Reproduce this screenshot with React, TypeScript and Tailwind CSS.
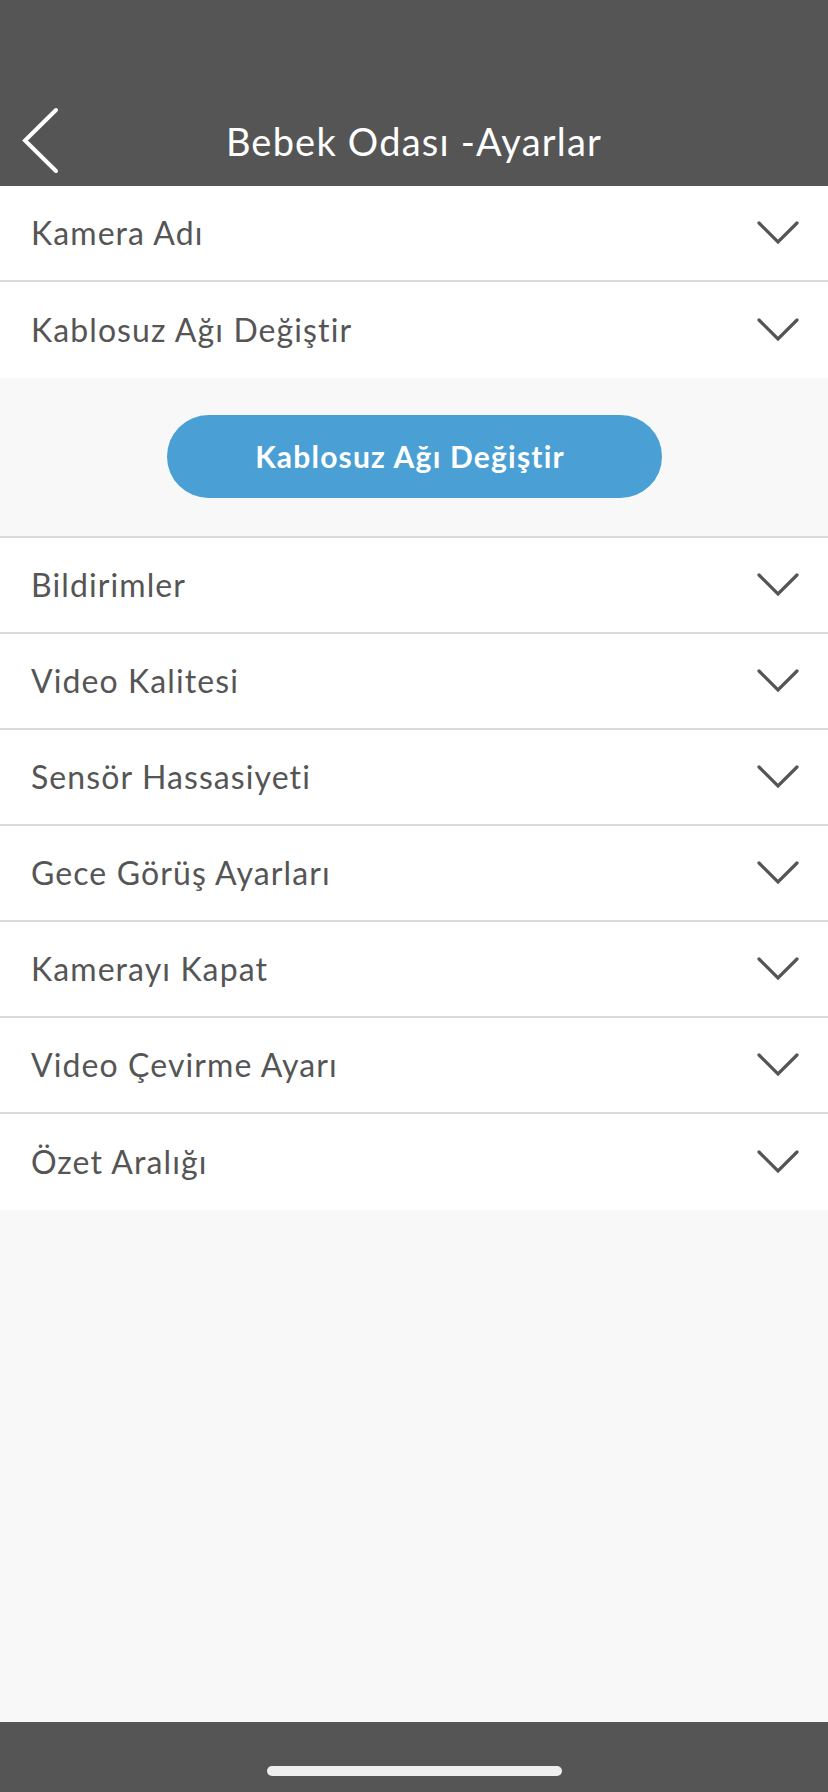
import React from "react";

const rowsTop = ["Kamera Adı", "Kablosuz Ağı Değiştir"];
const rowsBottom = [
  "Bildirimler",
  "Video Kalitesi",
  "Sensör Hassasiyeti",
  "Gece Görüş Ayarları",
  "Kamerayı Kapat",
  "Video Çevirme Ayarı",
  "Özet Aralığı",
];

function ChevronDown() {
  return (
    <svg width="44" height="26" viewBox="0 0 44 26" fill="none">
      <path d="M3 3 L22 22 L41 3" stroke="#555555" strokeWidth="3.2" strokeLinecap="round" strokeLinejoin="miter" />
    </svg>
  );
}

function Row({ label, border }: { label: string; border: boolean }) {
  return (
    <div className={`flex h-[96px] items-center justify-between bg-white pl-[31px] pr-[28px] ${border ? "border-b-2 border-[#dadada]" : ""}`}>
      <span className="text-[32px] leading-none tracking-[1.1px] text-[#555555]">{label}</span>
      <ChevronDown />
    </div>
  );
}

export default function App() {
  return (
    <div
      className="flex h-[1792px] w-[828px] flex-col bg-[#f8f8f8]"
      style={{ fontFamily: "Lato, 'Noto Sans', sans-serif" }}
    >
      <header className="relative flex h-[186px] shrink-0 items-end justify-center bg-[#555555] pb-[15px]">
        <button className="absolute left-[20px] top-[106px]">
          <svg width="42" height="70" viewBox="0 0 42 70" fill="none">
            <path d="M36 4 L5 34.5 L36 65" stroke="white" strokeWidth="4" strokeLinecap="round" strokeLinejoin="miter" />
          </svg>
        </button>
        <h1 className="text-[38px] font-normal leading-[60px] tracking-[1.2px] text-white">Bebek Odası -Ayarlar</h1>
      </header>

      <div className="flex flex-col">
        {rowsTop.map((l, i) => (
          <Row key={l} label={l} border={i === 0} />
        ))}
      </div>

      <div className="flex h-[160px] items-center justify-center border-b-2 border-[#dadada] bg-[#f8f8f8] pb-[2px]">
        <button className="flex h-[83px] w-[495px] items-center justify-center rounded-full bg-[#4aa0d5] pr-[8px] text-[30px] font-bold tracking-[1.2px] text-white">
          Kablosuz Ağı Değiştir
        </button>
      </div>

      <div className="flex flex-col">
        {rowsBottom.map((l, i) => (
          <Row key={l} label={l} border={i < rowsBottom.length - 1} />
        ))}
      </div>

      <div className="flex-1" />

      <div className="flex h-[70px] shrink-0 items-start justify-center bg-[#555555] pt-[44px]">
        <div className="h-[10px] w-[295px] rounded-full bg-[#efefef]" />
      </div>
    </div>
  );
}
